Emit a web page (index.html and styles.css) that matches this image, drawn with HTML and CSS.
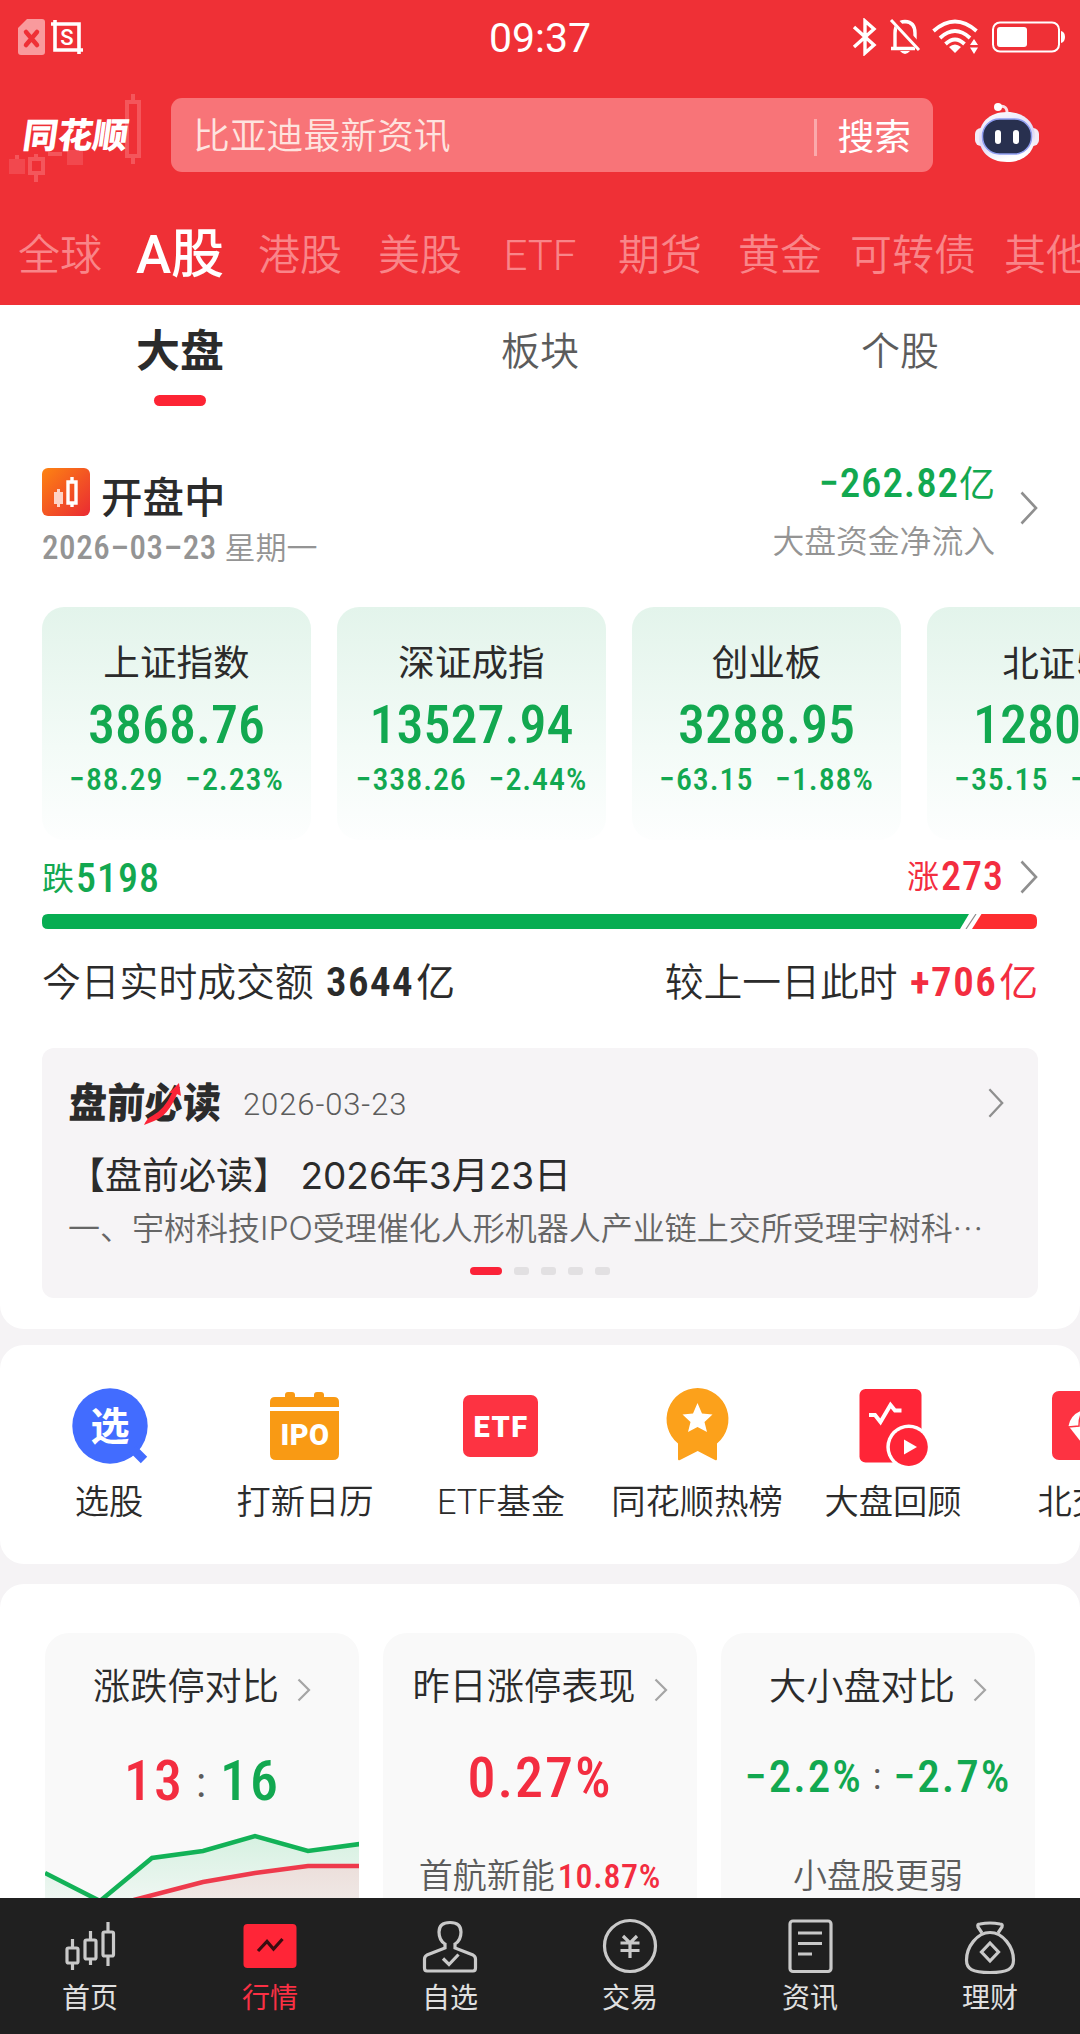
FILE: index.html
```html
<!DOCTYPE html>
<html lang="zh-CN">
<head>
    <meta charset="UTF-8">
    <meta name="viewport" content="width=device-width, initial-scale=1.0">
    <title>同花顺 - 行情</title>
    <link rel="stylesheet" href="styles.css">
</head>
<body>
    <header class="header">
        <div class="status-bar">
            <div class="status-left">
                <svg width="27" height="36" viewBox="0 0 27 36">
                    <path d="M9 0H24Q27 0 27 3V33Q27 36 24 36H3Q0 36 0 33V9Z" fill="#f99a9d"/>
                    <path d="M8 13L19 26M19 13L8 26" stroke="#ef3036" stroke-width="4.5" stroke-linecap="round"/>
                </svg>
                <svg width="32" height="34" viewBox="0 0 32 34">
                    <path d="M0 4H28V34M4 0V30H32" fill="none" stroke="#fff" stroke-width="3.6"/>
                    <text x="16" y="24.5" class="crop-text">S</text>
                </svg>
            </div>
            <div class="status-time">09:37</div>
            <div class="status-right">
                <svg width="26" height="38" viewBox="0 0 26 38">
                    <path d="M2 9L22 27L13 35V3L22 11L2 29" fill="none" stroke="#fff" stroke-width="3.4"/>
                </svg>
                <svg width="32" height="36" viewBox="0 0 32 36">
                    <path d="M6 29V14Q6 3 16 2.5Q26 3 26 14V24M2 29.500H26" fill="none" stroke="#fff" stroke-width="3.4"/>
                    <path d="M11 32H21Q16 38 11 32Z" fill="#fff"/>
                    <path d="M4 0L31 29" stroke="#ef3036" stroke-width="7"/>
                    <path d="M2 1L30 31" stroke="#fff" stroke-width="3"/>
                </svg>
                <svg width="47" height="36" viewBox="0 0 47 36">
                    <g fill="none" stroke="#fff" stroke-width="3.8">
                        <path d="M1.500 12Q23 -7 44.500 12"/>
                        <path d="M8 19Q23 5 38 19"/>
                        <path d="M13.500 25Q23 16 32.500 25"/>
                    </g>
                    <path d="M17 28Q23 23 29 28L23 34Z" fill="#fff"/>
                    <path d="M42 20L46 26H38ZM42 35L46 28.500H38Z" fill="#fff"/>
                </svg>
                <svg width="74" height="32" viewBox="0 0 74 32">
                    <rect x="1" y="1.500" width="66" height="29" rx="7" fill="none" stroke="#fff" stroke-width="2"/>
                    <rect x="5" y="6" width="30" height="20" rx="3" fill="#fff"/>
                    <path d="M69 10Q73 11 73 16T69 22Z" fill="#fff"/>
                </svg>
            </div>
        </div>

        <div class="search-row">
            <div class="logo">
                <svg class="logo-bg" width="171" height="100" viewBox="0 90 171 100">
                    <g fill="none" stroke="#f4565b" stroke-width="4">
                        <rect x="127" y="102" width="12" height="54"/>
                        <rect x="30" y="159" width="13" height="14"/>
                        <path d="M133 94V101M133 157V164M36 154V158M36 174V182M17 155V160M48 154H62"/>
                    </g>
                    <path d="M9 159H25V174H9ZM67 150H83V165H67Z" fill="#f2484e"/>
                </svg>
                <span class="logo-text">同花顺</span>
            </div>
            <div class="search-box">
                <span class="search-hint">比亚迪最新资讯</span>
                <span class="search-btn">搜索</span>
            </div>
            <div class="robot">
                <svg width="64" height="60" viewBox="0 0 64 60">
                    <defs>
                        <linearGradient id="robotHead" x1="0" y1="0" x2="0.3" y2="1">
                            <stop offset="0" stop-color="#fff"/>
                            <stop offset="0.6" stop-color="#dcd6f6"/>
                            <stop offset="1" stop-color="#fff"/>
                        </linearGradient>
                    </defs>
                    <path d="M23 4Q33 1 32 12" fill="none" stroke="#fbdde4" stroke-width="3"/>
                    <circle cx="23" cy="4" r="4" fill="#fff"/>
                    <rect x="0" y="25" width="12" height="18" rx="6" fill="#f3ebf7"/>
                    <rect x="52" y="25" width="12" height="18" rx="6" fill="#f3ebf7"/>
                    <path d="M32 9C50 9 60 20 60 34S50 59 32 59S4 48 4 34S14 9 32 9Z" fill="url(#robotHead)"/>
                    <rect x="7.500" y="16" width="49" height="35" rx="17" fill="#28304f" stroke="#8f9df0" stroke-width="1.500"/>
                    <rect x="20" y="27" width="6" height="14" rx="3" fill="#fff"/>
                    <rect x="38" y="27" width="6" height="14" rx="3" fill="#fff"/>
                </svg>
            </div>
        </div>

        <nav class="market-tabs">
            <span>全球</span>
            <span class="active">A股</span>
            <span>港股</span>
            <span>美股</span>
            <span>ETF</span>
            <span>期货</span>
            <span>黄金</span>
            <span class="wide">可转债</span>
            <span>其他</span>
        </nav>
    </header>

    <main class="content">
        <section class="overview">
            <div class="sub-tabs">
                <div class="sub-tab active">大盘</div>
                <div class="sub-tab">板块</div>
                <div class="sub-tab">个股</div>
            </div>

            <div class="market-status">
                <div class="status-info">
                    <div class="status-name">
                        <svg width="48" height="48" viewBox="0 0 48 48">
                            <defs>
                                <linearGradient id="openIcon" x1="0" y1="0" x2="1" y2="1">
                                    <stop offset="0" stop-color="#fd8412"/>
                                    <stop offset="1" stop-color="#ea2a33"/>
                                </linearGradient>
                            </defs>
                            <rect width="48" height="48" rx="6" fill="url(#openIcon)"/>
                            <path d="M12 24H15V21H18V24H21V36H18V39H15V36H12Z" fill="#fdd3c6"/>
                            <path d="M26 14H34V35H26ZM30 9V14M30 35V39" fill="none" stroke="#fff" stroke-width="3.400"/>
                        </svg>
                        <span>开盘中</span>
                    </div>
                    <div class="status-date"><span class="num">2026–03–23</span> 星期一</div>
                </div>
                <div class="fund-flow">
                    <div class="fund-value down"><span class="num">−262.82</span>亿</div>
                    <div class="fund-label">大盘资金净流入</div>
                </div>
                <svg class="arrow" width="18" height="34" viewBox="0 0 18 34"><path d="M1.500 1.500L16 17L1.500 32.500"/></svg>
            </div>

            <div class="index-list">
                <div class="index-card">
                    <div class="index-name">上证指数</div>
                    <div class="index-value num">3868.76</div>
                    <div class="index-change num"><span>−88.29</span><span>−2.23%</span></div>
                </div>
                <div class="index-card">
                    <div class="index-name">深证成指</div>
                    <div class="index-value num">13527.94</div>
                    <div class="index-change num"><span>−338.26</span><span>−2.44%</span></div>
                </div>
                <div class="index-card">
                    <div class="index-name">创业板</div>
                    <div class="index-value num">3288.95</div>
                    <div class="index-change num"><span>−63.15</span><span>−1.88%</span></div>
                </div>
                <div class="index-card">
                    <div class="index-name latin">北证50</div>
                    <div class="index-value num">1280.00</div>
                    <div class="index-change num"><span>−35.15</span><span>−2.67%</span></div>
                </div>
            </div>

            <div class="count-row">
                <div class="down">跌<span class="num">5198</span></div>
                <div class="up count-up">涨<span class="num">273</span>
                    <svg class="arrow" width="18" height="34" viewBox="0 0 18 34"><path d="M1.500 1.500L16 17L1.500 32.500"/></svg>
                </div>
            </div>
            <svg class="count-bar" width="995" height="15" viewBox="0 0 995 15">
                <path d="M6 0H927L918 15H6Q0 15 0 9V6Q0 0 6 0Z" fill="#07ad52"/>
                <path d="M934 0L924 15" stroke="#8b8b8b" stroke-width="1.200"/>
                <path d="M939.500 0H989Q995 0 995 6V9Q995 15 989 15H930Z" fill="#fd2d30"/>
            </svg>

            <div class="volume-row">
                <div>今日实时成交额 <b class="num">3644</b><em>亿</em></div>
                <div>较上一日此时 <b class="num up">+706</b><em class="up">亿</em></div>
            </div>

            <div class="news-card">
                <div class="news-head">
                    <div class="news-logo"><span>盘前必读</span>
                        <svg class="news-slash" width="38" height="42" viewBox="0 0 38 42">
                            <path d="M0 42Q3 35 8 33Q20 27 28 10L25 10L35 0L37 13L33 11Q24 33 10 38Z" fill="#fb2436"/>
                        </svg>
                    </div>
                    <span class="news-date">2026-03-23</span>
                    <svg class="arrow" width="18" height="30" viewBox="0 0 18 34"><path d="M1.500 1.500L16 17L1.500 32.500"/></svg>
                </div>
                <div class="news-title latin">【盘前必读】 2026年3月23日</div>
                <div class="news-desc latin">一、宇树科技IPO受理催化人形机器人产业链上交所受理宇树科<span>···</span></div>
                <div class="news-dots"><i class="on"></i><i></i><i></i><i></i><i></i></div>
            </div>
        </section>

        <section class="shortcuts">
            <div class="shortcut">
                <svg width="84" height="84" viewBox="0 0 84 84">
                    <circle cx="43" cy="41" r="37.700" fill="#426cff"/>
                    <path d="M66 64L77 75" stroke="#426cff" stroke-width="9"/>
                    <text x="43" y="55" class="icon-cjk">选</text>
                </svg>
                选股
            </div>
            <div class="shortcut">
                <svg width="84" height="84" viewBox="0 0 84 84">
                    <g fill="#f99a14">
                        <rect x="22" y="7" width="10" height="12" rx="3"/>
                        <rect x="51" y="7" width="10" height="12" rx="3"/>
                        <path d="M12 12H71Q76 12 76 17V22H7V17Q7 12 12 12Z"/>
                        <path d="M7 26H76V69Q76 75 70 75H13Q7 75 7 69Z"/>
                    </g>
                    <text x="42" y="60" class="icon-latin">IPO</text>
                </svg>
                打新日历
            </div>
            <div class="shortcut">
                <svg width="84" height="84" viewBox="0 0 84 84">
                    <rect x="4" y="10" width="75" height="62" rx="7" fill="#fd3342"/>
                    <text x="42" y="51.500" class="icon-latin wide">ETF</text>
                </svg>
                ETF基金
            </div>
            <div class="shortcut">
                <svg width="84" height="84" viewBox="0 0 84 84">
                    <path d="M42.700 3A31.300 31.300 0 0 1 62 58.500V74Q62 76 60 75L42.700 66L25 75Q23 76 23 74V58.500A31.300 31.300 0 0 1 42.700 3Z" fill="#fca11b"/>
                    <path d="M42.500 18L47 28.500L57.500 29.500L49.500 37L52 47L42.500 42L33 47L35.500 37L27.500 29.500L38 28.500Z" fill="#fff"/>
                </svg>
                同花顺热榜
            </div>
            <div class="shortcut">
                <svg width="84" height="84" viewBox="0 0 84 84">
                    <rect x="8.500" y="4" width="62" height="73.500" rx="6" fill="#ff2537"/>
                    <path d="M18 30H24L29.500 37L39.500 20L44 25.500H50.500" fill="none" stroke="#fff" stroke-width="4"/>
                    <circle cx="57.800" cy="62" r="22.500" fill="#fff"/>
                    <circle cx="57.800" cy="62" r="19" fill="#ff2537"/>
                    <path d="M53 54.500L66 62L53 69.500Z" fill="#fff"/>
                </svg>
                大盘回顾
            </div>
            <div class="shortcut">
                <svg width="84" height="84" viewBox="0 0 84 84">
                    <rect x="5" y="6" width="72" height="69" rx="7" fill="#fd3342"/>
                    <path d="M21.500 41Q24 27 41 24Q58 27 61 41L41 66Z" fill="#fff"/>
                    <path d="M21 42L32 41Q32 32 35 28" fill="none" stroke="#fd3342" stroke-width="1.500"/>
                </svg>
                北交所
            </div>
        </section>

        <section class="compare">
            <div class="compare-card">
                <div class="compare-title">涨跌停对比<svg class="arrow thin" width="14" height="24" viewBox="0 0 14 24"><path d="M1.500 1.500L12 12L1.500 22.500"/></svg></div>
                <div class="compare-value num"><span class="up">13</span><i>:</i><span class="down">16</span></div>
                <svg class="chart" width="315" height="80" viewBox="0 0 315 80">
                    <defs>
                        <linearGradient id="greenArea" x1="0" y1="0" x2="0" y2="1">
                            <stop offset="0" stop-color="#d6f1e1"/>
                            <stop offset="1" stop-color="#f3f7f5"/>
                        </linearGradient>
                        <linearGradient id="redArea" x1="0" y1="0" x2="0" y2="1">
                            <stop offset="0" stop-color="#ecdfdb"/>
                            <stop offset="1" stop-color="#f0eae8"/>
                        </linearGradient>
                    </defs>
                    <path d="M0 43L55 71L107 28L158 21L210 6L263 21L315 14V80H0Z" fill="url(#greenArea)"/>
                    <path d="M89 69L158 52L210 43L263 36H315V80H89Z" fill="url(#redArea)"/>
                    <path d="M70 76L89 70L158 52L210 43L263 36H315" fill="none" stroke="#ee3a4c" stroke-width="4.500"/>
                    <path d="M0 43L55 71L107 28L158 21L210 6L263 21L315 14" fill="none" stroke="#12b257" stroke-width="4.500"/>
                </svg>
            </div>
            <div class="compare-card">
                <div class="compare-title">昨日涨停表现<svg class="arrow thin" width="14" height="24" viewBox="0 0 14 24"><path d="M1.500 1.500L12 12L1.500 22.500"/></svg></div>
                <div class="compare-value num up">0.27%</div>
                <div class="compare-desc">首航新能<span class="num up">10.87%</span></div>
            </div>
            <div class="compare-card">
                <div class="compare-title">大小盘对比<svg class="arrow thin" width="14" height="24" viewBox="0 0 14 24"><path d="M1.500 1.500L12 12L1.500 22.500"/></svg></div>
                <div class="compare-value small num"><span class="down">−2.2%</span><i>:</i><span class="down">−2.7%</span></div>
                <div class="compare-desc">小盘股更弱</div>
            </div>
        </section>
    </main>

    <footer class="tab-bar">
        <div class="tab-item">
            <svg width="60" height="60" viewBox="0 0 60 60">
                <rect x="7" y="31" width="11" height="15" rx="1.500"/>
                <rect x="25" y="23" width="11" height="19" rx="1.500"/>
                <rect x="43" y="15" width="10.500" height="24" rx="1.500"/>
                <path d="M12.500 22V31M12.500 46V53M30.500 14V23M30.500 42V48M48 5V15M48 39V49"/>
            </svg>
            首页
        </div>
        <div class="tab-item active">
            <svg width="60" height="60" viewBox="0 0 60 60">
                <rect x="3.500" y="7" width="53" height="44" rx="4" class="solid"/>
                <path d="M18 34L27 24.500L33.500 32L42.500 22" class="dark"/>
            </svg>
            行情
        </div>
        <div class="tab-item">
            <svg width="60" height="60" viewBox="0 0 60 60">
                <path d="M25 27C20 24 19 20 19 15Q19 5.500 30 5.500T41 15C41 20 40 24 35 27V31L53 38Q55.500 39.500 55.500 42V51Q55.500 54 53 54H7Q4.500 54 4.500 51V42Q4.500 39.500 7 38L25 31Z"/>
                <path d="M23 41.500L29 47.500L38.500 37.500"/>
            </svg>
            自选
        </div>
        <div class="tab-item">
            <svg width="60" height="60" viewBox="0 0 60 60">
                <circle cx="30" cy="29" r="25.500"/>
                <path d="M23 19L30 26L37 19M20.500 26H39.500M20.500 33.500H39.500M30 26V41"/>
            </svg>
            交易
        </div>
        <div class="tab-item">
            <svg width="60" height="60" viewBox="0 0 60 60">
                <rect x="10" y="4" width="41" height="50.500" rx="3"/>
                <path d="M18 16H42M18 26.500H42M18 37H32"/>
            </svg>
            资讯
        </div>
        <div class="tab-item">
            <svg width="60" height="60" viewBox="0 0 60 60">
                <path d="M22 16L18 10Q17 7 20 7Q30 5 40 7Q43 7 42 10L38 16"/>
                <path d="M30 15.500C43 15.500 53.500 30 53.500 43C53.500 52 48 55.500 30 55.500S6.500 52 6.500 43C6.500 30 17 15.500 30 15.500Z"/>
                <path d="M30 26L38.500 35L30 44L21.500 35Z"/>
            </svg>
            理财
        </div>
    </footer>
</body>
</html>
```
FILE: styles.css
```css
* {
    box-sizing: border-box;
}
body {
    margin: 0;
    width: 1080px;
    height: 2034px;
    display: flex;
    flex-direction: column;
    overflow: hidden;
    background-color: #f5f3f5;
    color: #2b2b2b;
    font-family: Roboto, "Noto Sans CJK SC", sans-serif;
}
svg {
    display: block;
    flex: none;
}
i, em {
    font-style: normal;
}
.num {
    font-family: "Roboto Condensed", Roboto, sans-serif;
    font-weight: 500;
}
.latin {
    font-family: Inter, "Noto Sans CJK SC", sans-serif;
}
.up {
    color: #f32d40;
}
.down {
    color: #12a850;
}
.arrow {
    fill: none;
    stroke: #8f8f8f;
    stroke-width: 2.6;
}
.arrow.thin {
    stroke: #a5a5a5;
    stroke-width: 2.2;
}

/* 顶部 */
.header {
    flex: none;
    height: 305px;
    overflow: hidden;
    background-color: #ef3036;
    color: #fff;
}
.status-bar {
    height: 73px;
    padding: 0 14px 0 18px;
    display: grid;
    grid-template-columns: 1fr auto 1fr;
    align-items: center;
}
.status-left {
    display: flex;
    align-items: center;
    gap: 6px;
}
.status-time {
    margin-right: 4px;
    font-size: 41px;
    line-height: 76px;
    height: 73px;
}
.status-right {
    display: flex;
    align-items: center;
    justify-content: flex-end;
    gap: 11px;
}
.status-right svg:last-child {
    margin-left: 2px;
}
.crop-text {
    fill: #fff;
    font-size: 22px;
    font-weight: 500;
    text-anchor: middle;
}
.search-row {
    height: 74px;
    margin-top: 25px;
    display: flex;
    align-items: center;
}
.logo {
    position: relative;
    width: 171px;
    height: 74px;
    padding-left: 23px;
}
.logo-bg {
    position: absolute;
    left: 0;
    top: -8px;
}
.logo-text {
    position: relative;
    display: inline-block;
    font-size: 35px;
    font-weight: 800;
    line-height: 77px;
    transform: skewX(-8deg);
}
.search-box {
    width: 762px;
    height: 74px;
    padding: 4px 22px 0 22px;
    display: flex;
    align-items: center;
    justify-content: space-between;
    border-radius: 11px;
    background-color: #f87478;
    font-size: 36.8px;
    line-height: 76px;
}
.search-hint {
    font-weight: 350;
    color: #fee3df;
}
.search-btn {
    padding-left: 20px;
    line-height: 37px;
    border-left: 3px solid #fba9ab;
}
.robot {
    margin: -4px 0 0 42px;
}
.market-tabs {
    width: 1200px;
    height: 100px;
    margin-top: 33px;
    display: flex;
    font-size: 42px;
    font-weight: 350;
    line-height: 101px;
    color: #f98589;
}
.market-tabs span {
    width: 120px;
    text-align: center;
    white-space: nowrap;
}
.market-tabs .wide {
    width: 146px;
}
.market-tabs .active {
    font-size: 53px;
    font-weight: 500;
    color: #fff;
}

/* 大盘 */
.content {
    flex: 1;
    overflow: hidden;
}
.overview {
    height: 1024px;
    padding: 0 42px;
    overflow: hidden;
    border-radius: 0 0 24px 24px;
    background-color: #fff;
}
.sub-tabs {
    height: 101px;
    margin: 0 -42px;
    padding-top: 16px;
    display: flex;
}
.sub-tab {
    width: 360px;
    text-align: center;
    font-size: 39px;
    font-weight: 350;
    line-height: 63px;
    color: #5c5c5c;
}
.sub-tab.active {
    font-size: 44px;
    font-weight: 600;
    color: #2b2b2b;
}
.sub-tab.active::after {
    content: "";
    display: block;
    width: 52px;
    height: 11px;
    margin: 11px auto 0;
    border-radius: 6px;
    background-color: #fd2434;
}
.market-status {
    height: 106px;
    margin-top: 55px;
    display: flex;
    align-items: flex-start;
}
.status-info {
    padding-top: 5px;
}
.status-name {
    height: 52px;
    display: flex;
    align-items: center;
    gap: 11px;
    font-size: 41.5px;
    font-weight: 500;
}
.status-name span {
    padding-top: 6px;
}
.status-date {
    margin-top: 9px;
    font-size: 31px;
    font-weight: 350;
    line-height: 41px;
    color: #949494;
}
.status-date .num {
    font-size: 33px;
    letter-spacing: 0.6px;
}
.fund-flow {
    margin-left: auto;
    text-align: right;
}
.fund-value {
    font-size: 36px;
    line-height: 44px;
}
.fund-value .num {
    font-size: 41px;
    letter-spacing: 0.9px;
}
.fund-label {
    margin-top: 14px;
    font-size: 31.8px;
    font-weight: 350;
    line-height: 42px;
    color: #949494;
}
.market-status > .arrow {
    margin: 30px 0 0 25px;
}
.index-list {
    width: 1200px;
    margin-top: 40px;
    display: flex;
    gap: 26px;
}
.index-card {
    width: 269px;
    height: 233px;
    padding-top: 31px;
    border-radius: 22px;
    background: linear-gradient(#e3f4eb, #f3fbf7 60%, #fdfefe);
    text-align: center;
}
.index-name {
    font-size: 36.6px;
    line-height: 52px;
    color: #2b2b2b;
}
.index-value {
    margin-top: 8px;
    font-size: 54px;
    line-height: 54px;
    color: #12a850;
}
.index-change {
    margin-top: 9px;
    display: flex;
    justify-content: center;
    gap: 22px;
    font-size: 32px;
    line-height: 36px;
    letter-spacing: 0.9px;
    color: #12a850;
}
.count-row {
    height: 44px;
    margin-top: 15px;
    display: flex;
    justify-content: space-between;
    font-size: 32px;
    line-height: 48px;
}
.count-row .num {
    margin-left: 2px;
    font-size: 40px;
    letter-spacing: 1px;
    vertical-align: -2px;
}
.count-up {
    display: flex;
    align-items: center;
}
.count-up .arrow {
    margin-left: 16px;
}
.count-bar {
    margin-top: 15px;
}
.volume-row {
    margin-top: 27px;
    display: flex;
    justify-content: space-between;
    font-size: 38.8px;
    font-weight: 350;
    line-height: 52px;
}
.volume-row em {
    margin-left: 2px;
    font-weight: 400;
}
.volume-row .num {
    margin-left: 3px;
    font-size: 41px;
    font-weight: 600;
    letter-spacing: 1.4px;
}
.news-card {
    height: 250px;
    margin-top: 39px;
    padding: 31px 27px 0;
    border-radius: 12px;
    background-color: #f6f4f6;
}
.news-head {
    height: 50px;
    display: flex;
    align-items: center;
}
.news-logo {
    position: relative;
    font-size: 38px;
    font-weight: 900;
    line-height: 50px;
}
.news-logo span {
    display: inline-block;
    transform: scaleY(1.1) skewX(-3deg);
}
.news-slash {
    position: absolute;
    left: 75px;
    top: 4px;
}
.news-date {
    margin-left: 22px;
    font-size: 31px;
    font-weight: 350;
    letter-spacing: 0.9px;
    color: #5c5c5c;
}
.news-head .arrow {
    margin: 0 6px 2px auto;
}
.news-title {
    margin-top: 21px;
    margin-left: -1px;
    font-size: 37px;
    line-height: 52px;
    white-space: pre;
}
.news-desc {
    margin-top: 4px;
    margin-left: -1px;
    font-size: 32px;
    font-weight: 350;
    line-height: 46px;
    white-space: nowrap;
    color: #666;
}
.news-desc span {
    letter-spacing: 1.5px;
}
.news-dots {
    margin-top: 15px;
    display: flex;
    justify-content: center;
    gap: 12px;
}
.news-dots i {
    width: 15px;
    height: 8px;
    border-radius: 3px;
    background-color: #e2e0e2;
}
.news-dots .on {
    width: 32px;
    border-radius: 4px;
    background-color: #fb2238;
}

/* 快捷入口 */
.shortcuts {
    height: 219px;
    margin-top: 16px;
    padding: 40px 0 0 11px;
    display: flex;
    overflow: hidden;
    border-radius: 24px;
    background-color: #fff;
}
.shortcut {
    flex: none;
    width: 196px;
    display: flex;
    flex-direction: column;
    align-items: center;
    gap: 8px;
    font-size: 34.3px;
    font-weight: 350;
    line-height: 50px;
}
.icon-cjk {
    fill: #fff;
    font-family: "Noto Sans CJK SC", sans-serif;
    font-size: 39px;
    font-weight: 700;
    text-anchor: middle;
}
.icon-latin {
    fill: #fff;
    font-size: 29px;
    font-weight: 900;
    letter-spacing: 0.4px;
    text-anchor: middle;
}
.icon-latin.wide {
    letter-spacing: 1.4px;
}

/* 对比 */
.compare {
    height: 400px;
    margin-top: 20px;
    padding: 49px 45px 0;
    display: grid;
    grid-template-columns: repeat(3, 1fr);
    gap: 24px;
    border-radius: 24px 24px 0 0;
    background-color: #fff;
}
.compare-card {
    height: 340px;
    padding-top: 29px;
    overflow: hidden;
    border-radius: 24px;
    background-color: #f9f9f9;
    text-align: center;
}
.compare-title {
    display: flex;
    align-items: center;
    justify-content: center;
    gap: 18px;
    font-size: 37.2px;
    font-weight: 350;
    line-height: 51px;
}
.compare-title .arrow {
    margin-top: 4px;
}
.compare-value {
    margin-top: 40px;
    font-size: 56px;
    line-height: 50px;
    letter-spacing: 2px;
}
.compare-card:first-child .compare-value {
    position: relative;
    top: 3px;
}
.compare-value i {
    margin: 0 12px;
    font-size: 42px;
    font-weight: 400;
    vertical-align: 3px;
    color: #5c5c5c;
}
.compare-value.small {
    font-size: 45px;
    line-height: 47px;
    height: 50px;
}
.compare-value.small i {
    margin: 0 10px;
    font-size: 36px;
}
.compare-desc {
    margin-top: 50px;
    font-size: 34px;
    font-weight: 350;
    line-height: 46px;
    color: #5c5c5c;
}
.compare-desc .num {
    margin-left: 3px;
    letter-spacing: 0.7px;
}
.chart {
    margin-top: 25px;
}

/* 底部导航 */
.tab-bar {
    flex: none;
    height: 136px;
    padding-top: 19px;
    display: flex;
    background-color: #202020;
}
.tab-item {
    width: 180px;
    display: flex;
    flex-direction: column;
    align-items: center;
    font-size: 28px;
    line-height: 43px;
    color: #e0e0e0;
}
.tab-item svg {
    fill: none;
    stroke: #c9c9c9;
    stroke-width: 3.2;
}
.tab-item .solid {
    fill: #ff2537;
    stroke: none;
}
.tab-item .dark {
    stroke: #3a0d10;
}
.tab-item.active {
    color: #fb3044;
}
```
